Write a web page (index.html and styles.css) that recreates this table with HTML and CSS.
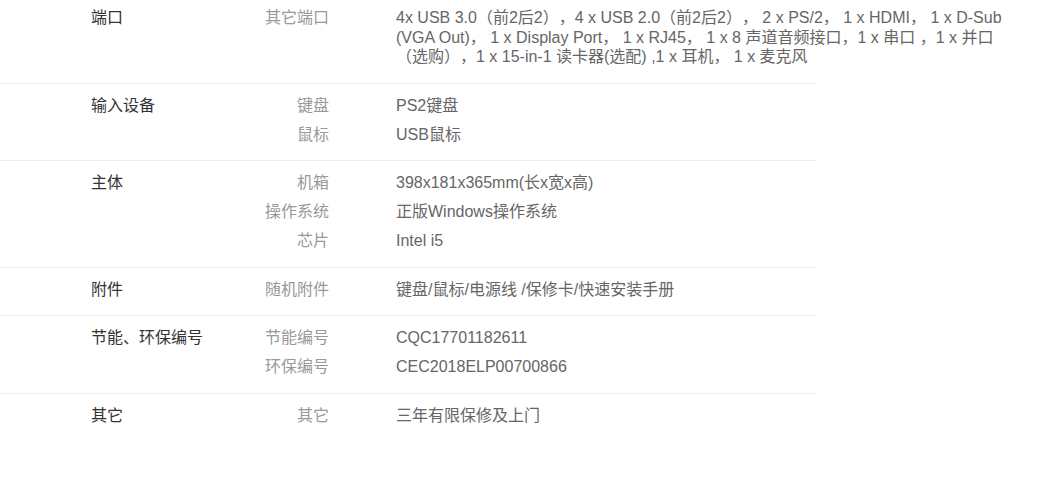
FILE: index.html
```html
<!DOCTYPE html>
<html lang="zh-CN">
<head>
<meta charset="utf-8">
<title>规格参数</title>
<link rel="stylesheet" href="styles.css">
</head>
<body>
<div class="specs">
  <div class="spec-group">
    <div class="group-name">端口</div>
    <div class="group-items">
      <div class="item"><div class="item-name">其它端口</div><div class="item-value">4x USB 3.0（前2后2），4 x USB 2.0（前2后2）， 2 x PS/2， 1 x HDMI， 1 x D-Sub (VGA Out)， 1 x Display Port， 1 x RJ45， 1 x 8 声道音频接口，1 x 串口 ，1 x 并口（选购），1 x 15-in-1 读卡器(选配) ,1 x 耳机， 1 x 麦克风</div></div>
    </div>
  </div>
  <div class="spec-group">
    <div class="group-name">输入设备</div>
    <div class="group-items">
      <div class="item"><div class="item-name">键盘</div><div class="item-value">PS2键盘</div></div>
      <div class="item"><div class="item-name">鼠标</div><div class="item-value">USB鼠标</div></div>
    </div>
  </div>
  <div class="spec-group">
    <div class="group-name">主体</div>
    <div class="group-items">
      <div class="item"><div class="item-name">机箱</div><div class="item-value">398x181x365mm(长x宽x高)</div></div>
      <div class="item"><div class="item-name">操作系统</div><div class="item-value">正版Windows操作系统</div></div>
      <div class="item"><div class="item-name">芯片</div><div class="item-value">Intel i5</div></div>
    </div>
  </div>
  <div class="spec-group">
    <div class="group-name">附件</div>
    <div class="group-items">
      <div class="item"><div class="item-name">随机附件</div><div class="item-value">键盘/鼠标/电源线 /保修卡/快速安装手册</div></div>
    </div>
  </div>
  <div class="spec-group">
    <div class="group-name">节能、环保编号</div>
    <div class="group-items">
      <div class="item"><div class="item-name">节能编号</div><div class="item-value">CQC17701182611</div></div>
      <div class="item"><div class="item-name">环保编号</div><div class="item-value">CEC2018ELP00700866</div></div>
    </div>
  </div>
  <div class="spec-group">
    <div class="group-name">其它</div>
    <div class="group-items">
      <div class="item"><div class="item-name">其它</div><div class="item-value">三年有限保修及上门</div></div>
    </div>
  </div>
</div>
</body>
</html>
```

FILE: styles.css
```css
html, body {
  margin: 0;
  background: #fff;
}

body {
  font-family: "Liberation Sans", "Noto Sans CJK SC", sans-serif;
  font-size: 16px;
  line-height: 19.5px;
  text-spacing-trim: space-all;
}

.specs {
  width: 817px;
  margin-top: -4px;
}

.spec-group {
  display: flex;
  padding: 12px 0 16px;
  border-bottom: 1px solid #eeeeee;
}

.spec-group:last-child {
  border-bottom: none;
}

.group-name {
  width: 180px;
  padding-left: 91px;
  box-sizing: border-box;
  flex-shrink: 0;
  white-space: nowrap;
  color: #333;
}

.group-items {
  display: flex;
  flex-direction: column;
  gap: 9.5px;
}

.item {
  display: flex;
}

.item-name {
  width: 149px;
  flex-shrink: 0;
  text-align: right;
  color: #999;
}

.item-value {
  width: 620px;
  flex-shrink: 0;
  margin-left: 67px;
  color: #666;
}
```
